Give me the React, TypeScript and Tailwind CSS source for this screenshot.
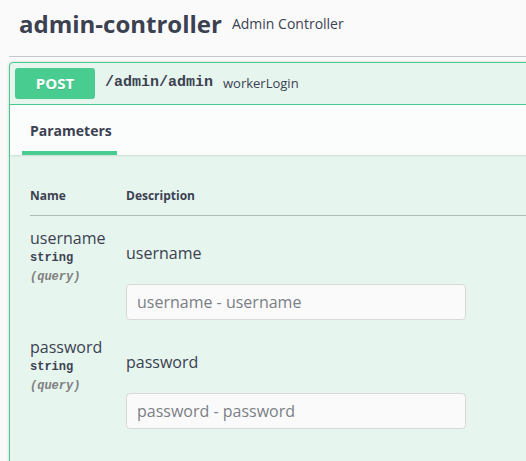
import React from 'react';

// parameter rows for the workerLogin operation
const params = [
  { name: 'username', type: 'string', location: 'query', description: 'username' },
  { name: 'password', type: 'string', location: 'query', description: 'password' },
];

const sans = "font-['Open_Sans',_'Liberation_Sans',_sans-serif]";
const mono = "font-['Liberation_Mono',_'DejaVu_Sans_Mono',_monospace]";

const App: React.FC = () => {
  return (
    <div className={`w-[526px] h-[461px] overflow-hidden bg-[#fafafa] text-[#3b4151] ${sans}`}>
      <div className="w-[600px] pl-[9px]">
        {/* tag header */}
        <div className="flex items-center h-[57px] pt-[8px] pb-[16px] pl-[10px] border-b border-[#c4c6ca]">
          <h3 className="text-[24px] leading-[32px] font-bold">admin-controller</h3>
          <small className="text-[14px] leading-[20px] px-[10px]">Admin Controller</small>
        </div>

        {/* opblock */}
        <div className="mt-[5px] border border-[#49cc90] rounded-[4px] bg-[#e6f5ee] shadow-[0_0_3px_rgba(0,0,0,0.19)] h-[420px]">
          <div className="flex items-center p-[5px] border-b border-[#49cc90]">
            <span className="min-w-[80px] text-center bg-[#49cc90] text-white font-bold text-[15px] leading-[19px] py-[6px] rounded-[3px] [text-shadow:0_1px_0_rgba(0,0,0,0.1)]">
              POST
            </span>
            <span className={`px-[10px] text-[15px] font-bold ${mono}`}>/admin/admin</span>
            <span className="text-[13px]">workerLogin</span>
          </div>

          {/* section header */}
          <div className="h-[50px] bg-[#fbfdfc] shadow-[0_1px_2px_rgba(0,0,0,0.1)] pl-[12px] flex">
            <div className="w-[95px] flex flex-col pt-[16px]">
              <h4 className="pl-[8px] text-[14px] leading-[20px] font-bold whitespace-nowrap">Parameters</h4>
              <div className="mt-auto h-[4px] bg-[#49cc90]" />
            </div>
          </div>

          {/* parameters table */}
          <div className="pl-[20px]">
            <div className="flex border-b border-[#b0bbb5] pt-[33px] pb-[12px] text-[12px] leading-[15px] font-bold">
              <div className="w-[96px]">Name</div>
              <div>Description</div>
            </div>
            {params.map((p) => (
              <div key={p.name} className="flex items-start pt-[11px] pb-[5px]">
                <div className="w-[96px] flex flex-col">
                  <div className="text-[16px] leading-[22px]">{p.name}</div>
                  <div className={`text-[12px] leading-[19px] font-bold ${mono}`}>{p.type}</div>
                  <div className={`text-[12px] leading-[19px] font-bold italic text-[#808080] ${mono}`}>({p.location})</div>
                </div>
                <div className="flex flex-col pt-[15px]">
                  <div className="text-[16px] leading-[22px]">{p.description}</div>
                  <input
                    type="text"
                    placeholder={`${p.name} - ${p.description}`}
                    className="mt-[20px] w-[340px] bg-[#fafafa] border border-[#d9d9d9] rounded-[4px] px-[10px] py-[6px] text-[16px] leading-[22px] placeholder:text-[#7b7f86] outline-none"
                  />
                </div>
              </div>
            ))}
          </div>
        </div>
      </div>
    </div>
  );
};

export default App;
